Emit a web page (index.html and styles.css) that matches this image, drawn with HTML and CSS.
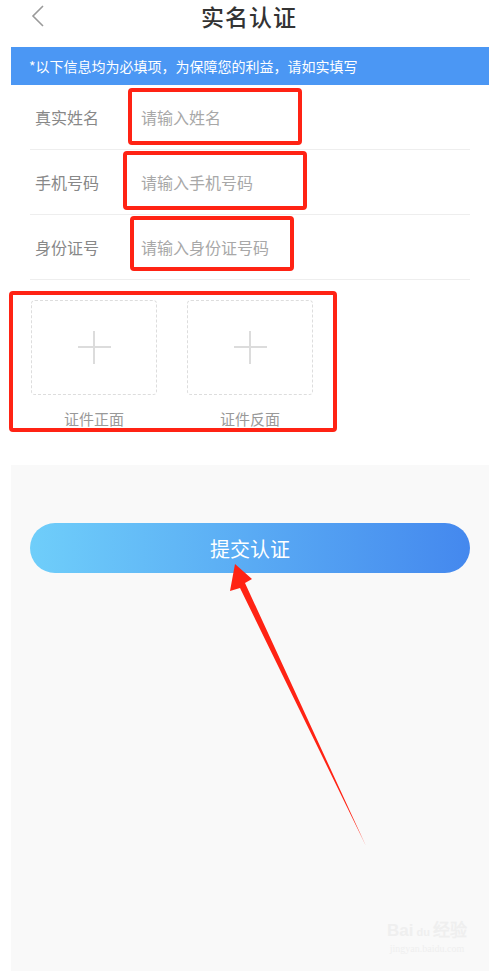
FILE: index.html
```html
<!DOCTYPE html>
<html lang="zh-CN">
<head>
    <meta charset="UTF-8">
    <meta name="viewport" content="width=device-width, initial-scale=1.0">
    <title>实名认证</title>
    <link rel="stylesheet" href="styles.css">
</head>
<body>
    <header class="top-bar">
        <svg class="back" width="14" height="24" viewBox="0 0 14 24">
            <polyline points="12,2 2,12 12,22" fill="none" stroke="#9a9a9a" stroke-width="1.6"/>
        </svg>
        <h1>实名认证</h1>
    </header>

    <div class="notice">*以下信息均为必填项，为保障您的利益，请如实填写</div>

    <div class="form">
        <div class="row">
            <span class="label">真实姓名</span>
            <input type="text" placeholder="请输入姓名">
        </div>
        <div class="row">
            <span class="label">手机号码</span>
            <input type="text" placeholder="请输入手机号码">
        </div>
        <div class="row">
            <span class="label">身份证号</span>
            <input type="text" placeholder="请输入身份证号码">
        </div>
    </div>

    <div class="uploads">
        <div class="upload">
            <div class="upload-box"><span class="plus"></span></div>
            <div class="upload-label">证件正面</div>
        </div>
        <div class="upload">
            <div class="upload-box"><span class="plus"></span></div>
            <div class="upload-label">证件反面</div>
        </div>
    </div>

    <div class="bottom">
        <button class="submit">提交认证</button>
        <div class="watermark">
            <span class="wm-logo">Bai<span class="wm-paw">du</span>经验</span>
            <span class="wm-url">jingyan.baidu.com</span>
        </div>
    </div>

    <!-- 标注：红框和箭头 -->
    <div class="mark mark-name"></div>
    <div class="mark mark-phone"></div>
    <div class="mark mark-id"></div>
    <div class="mark mark-upload"></div>
    <svg class="arrow" width="498" height="971" viewBox="0 0 498 971">
        <polygon points="235,564 252,579 245,583 366,846 240,588 230,591" fill="#ff2314"/>
    </svg>
</body>
</html>
```

FILE: styles.css
```css
body {
    margin: 0;
    font-family: "Noto Sans CJK SC", "Noto Sans", sans-serif;
    background-color: #ffffff;
    color: #333333;
    position: relative;
    min-height: 971px;
}
.top-bar {
    height: 47px;
    position: relative;
    display: flex;
    align-items: center;
    justify-content: center;
}
.top-bar h1 {
    margin: 0;
    margin-top: -16px;
    font-size: 23px;
    font-weight: 500;
    color: #333333;
    letter-spacing: 1px;
}
.back {
    position: absolute;
    left: 31px;
    top: 4px;
}
.notice {
    margin: 0 9px 0 11px;
    height: 38px;
    line-height: 38px;
    padding-left: 18px;
    background-color: #4b97f4;
    color: #ffffff;
    font-size: 14px;
}
.form {
    padding: 0 28px 0 30px;
}
.row {
    height: 64px;
    display: flex;
    align-items: center;
    border-bottom: 1px solid #eeeeee;
    padding-left: 5px;
}
.label {
    width: 106px;
    font-size: 16px;
    color: #888888;
}
.row input {
    border: none;
    outline: none;
    font-family: inherit;
    font-size: 16px;
    padding: 0;
    flex: 1;
    color: #333333;
    background: transparent;
}
.row input::placeholder {
    color: #a8a8a8;
}
.uploads {
    display: flex;
    gap: 30px;
    padding: 20px 0 0 31px;
    height: 185px;
    box-sizing: border-box;
}
.upload {
    width: 126px;
}
.upload-box {
    height: 95px;
    border: 1px dashed #dddddd;
    border-radius: 4px;
    box-sizing: border-box;
    display: flex;
    align-items: center;
    justify-content: center;
}
.plus {
    width: 33px;
    height: 33px;
    position: relative;
}
.plus::before,
.plus::after {
    content: "";
    position: absolute;
    background-color: #dcdcdc;
}
.plus::before {
    left: 0;
    right: 0;
    top: 15px;
    height: 2px;
}
.plus::after {
    top: 0;
    bottom: 0;
    left: 15px;
    width: 2px;
}
.upload-label {
    margin-top: 13px;
    text-align: center;
    font-size: 15px;
    color: #999999;
}
.bottom {
    margin: 0 9px 0 11px;
    background-color: #f9f9f9;
    height: 506px;
    padding: 58px 19px 0 19px;
    box-sizing: border-box;
    position: relative;
}
.submit {
    width: 440px;
    height: 50px;
    border: none;
    border-radius: 25px;
    background: linear-gradient(to right, #6fcefa, #4488ee);
    color: #ffffff;
    font-family: inherit;
    font-size: 20px;
    cursor: pointer;
}
.watermark {
    position: absolute;
    right: 22px;
    bottom: 16px;
    display: flex;
    flex-direction: column;
    align-items: center;
    color: #efefef;
}
.wm-logo {
    font-family: "Liberation Sans", sans-serif;
    font-size: 17px;
    font-weight: bold;
    line-height: 20px;
}
.wm-paw {
    font-size: 11px;
    margin: 0 3px;
}
.wm-url {
    font-family: "Liberation Serif", serif;
    font-size: 10px;
    line-height: 13px;
}
.mark {
    position: absolute;
    border: 4px solid #ff2314;
    border-radius: 4px;
    box-sizing: border-box;
}
.mark-name {
    left: 128px;
    top: 88px;
    width: 174px;
    height: 57px;
}
.mark-phone {
    left: 123px;
    top: 151px;
    width: 184px;
    height: 59px;
}
.mark-id {
    left: 130px;
    top: 216px;
    width: 164px;
    height: 55px;
}
.mark-upload {
    left: 9px;
    top: 291px;
    width: 328px;
    height: 141px;
}
.arrow {
    position: absolute;
    left: 0;
    top: 0;
    pointer-events: none;
}
```
